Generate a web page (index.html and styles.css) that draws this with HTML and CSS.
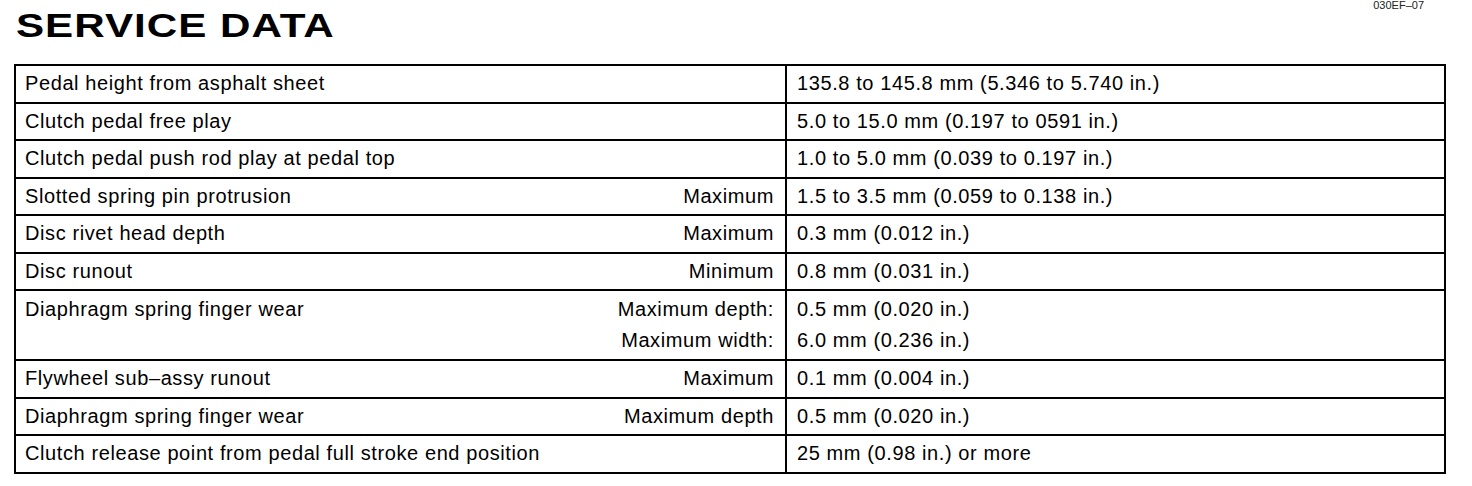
FILE: index.html
```html
<!DOCTYPE html>
<html>
<head>
<meta charset="utf-8">
<link rel="stylesheet" href="styles.css">
</head>
<body>
<div class="page">
  <header class="head">
    <h1 class="title"><span class="title-text">SERVICE DATA</span></h1>
    <span class="code">030EF–07</span>
  </header>
  <table class="data">
    <colgroup><col class="c1"><col class="c2"></colgroup>
    <tbody>
      <tr><td><div class="lab"><span>Pedal height from asphalt sheet</span></div></td><td>135.8 to 145.8 mm (5.346 to 5.740 in.)</td></tr>
      <tr><td><div class="lab"><span>Clutch pedal free play</span></div></td><td>5.0 to 15.0 mm (0.197 to 0591 in.)</td></tr>
      <tr><td><div class="lab"><span>Clutch pedal push rod play at pedal top</span></div></td><td>1.0 to 5.0 mm (0.039 to 0.197 in.)</td></tr>
      <tr><td><div class="lab"><span>Slotted spring pin protrusion</span><span class="q">Maximum</span></div></td><td>1.5 to 3.5 mm (0.059 to 0.138 in.)</td></tr>
      <tr><td><div class="lab"><span>Disc rivet head depth</span><span class="q">Maximum</span></div></td><td>0.3 mm (0.012 in.)</td></tr>
      <tr><td><div class="lab"><span>Disc runout</span><span class="q">Minimum</span></div></td><td>0.8 mm (0.031 in.)</td></tr>
      <tr class="dbl"><td><div class="lab"><span>Diaphragm spring finger wear</span><span class="q qs"><span>Maximum depth:</span><span>Maximum width:</span></span></div></td><td><div class="vals"><span>0.5 mm (0.020 in.)</span><span>6.0 mm (0.236 in.)</span></div></td></tr>
      <tr><td><div class="lab"><span>Flywheel sub–assy runout</span><span class="q">Maximum</span></div></td><td>0.1 mm (0.004 in.)</td></tr>
      <tr><td><div class="lab"><span>Diaphragm spring finger wear</span><span class="q">Maximum depth</span></div></td><td>0.5 mm (0.020 in.)</td></tr>
      <tr><td><div class="lab"><span>Clutch release point from pedal full stroke end position</span></div></td><td>25 mm (0.98 in.) or more</td></tr>
    </tbody>
  </table>
</div>
</body>
</html>
```
FILE: styles.css
```css
html, body {
  margin: 0;
  padding: 0;
  background: #fff;
}
body {
  font-family: "Liberation Sans", Arial, sans-serif;
  color: #000;
  width: 1472px;
  height: 486px;
  overflow: hidden;
}
.page {
  padding: 0 0 0 14px;
}
.head {
  display: flex;
  justify-content: space-between;
  align-items: flex-start;
  height: 64px;
}
.title {
  margin: 5px 0 0 2px;
  font-size: 34px;
  line-height: 40px;
  font-weight: bold;
}
.title-text {
  display: inline-block;
  letter-spacing: 0.8px;
  transform: scaleX(1.24);
  transform-origin: left center;
}
.code {
  font-size: 11px;
  line-height: 11px;
  margin-top: 0;
  margin-right: 48px;
  color: #222;
}
.data {
  border-collapse: collapse;
  width: 1432px;
  table-layout: fixed;
  font-size: 20px;
  letter-spacing: 0.6px;
}
.c1 { width: 771px; }
.data td {
  border: 2px solid #000;
  padding: 0 10px;
  line-height: 35.5px;
  vertical-align: middle;
  white-space: nowrap;
}
.data td:first-child {
  padding: 0 11px 0 9px;
}
.lab {
  display: flex;
  justify-content: space-between;
  align-items: flex-start;
}
.q {
  text-align: right;
}
.qs, .vals {
  display: flex;
  flex-direction: column;
}
.dbl td {
  line-height: 31px;
  padding-top: 3px;
  padding-bottom: 3px;
}
```
